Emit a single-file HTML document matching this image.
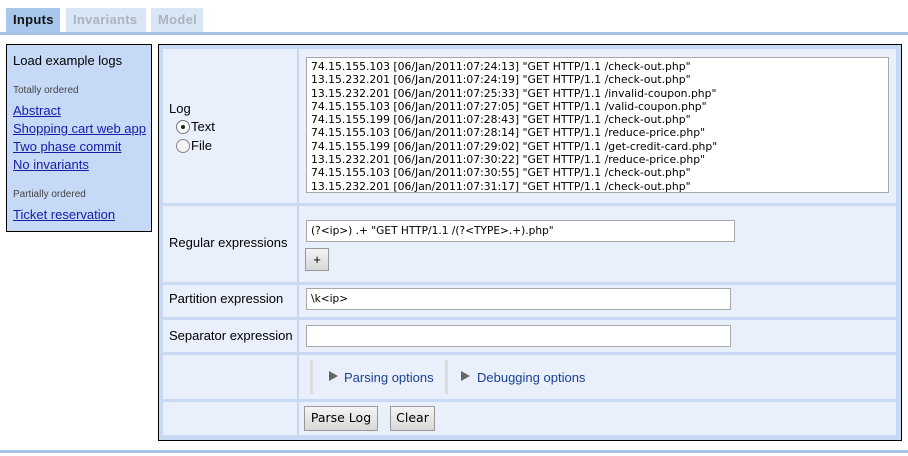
<!DOCTYPE html><html><head><style>
body{margin:0;width:908px;height:456px;background:#fff;font-family:"Liberation Sans",sans-serif;font-size:13px;position:relative;overflow:hidden}
.a{position:absolute}
.tab{position:absolute;top:8px;height:24px;line-height:24px;font-size:13px;font-weight:bold;padding:0 7px;letter-spacing:.3px}
a{color:#1a1aa6;text-decoration:underline}
.cell{position:absolute;background:#e9f0fc}
.inp{position:absolute;background:#fff;border:1px solid #a8a8a8;box-sizing:border-box;font-size:11px;padding:4px 4px;color:#000}
.btn{position:absolute;background:linear-gradient(#f4f4f4,#d8d8d8);border:1px solid #999;box-sizing:border-box;text-align:center;font-size:13px;line-height:22px}
.tri{position:absolute;width:0;height:0;border-left:9px solid #666;border-top:5px solid transparent;border-bottom:5px solid transparent}
</style></head><body>
<div class="tab" style="left:6px;width:40px;background:#a7c8ec;color:#111">Inputs</div>
<div class="tab" style="left:66px;width:66px;background:#d9e6f5;color:#a9b4c0">Invariants</div>
<div class="tab" style="left:151px;width:38px;background:#d9e6f5;color:#a9b4c0">Model</div>
<div class="a" style="left:0;top:32px;width:908px;height:3px;background:#a5c4e6"></div>
<div class="a" style="left:0;top:450px;width:908px;height:3px;background:#a5c4e6"></div>

<div class="a" style="left:6px;top:44px;width:144px;height:186px;border:1px solid #000;background:#c6daf8;font-size:13px;line-height:18px">
<div class="a" style="left:6px;top:7px">Load example logs</div>
<div class="a" style="left:6px;top:37px;font-size:10px;color:#444">Totally ordered</div>
<div class="a" style="left:6px;top:57px;white-space:nowrap"><a>Abstract</a><br><a>Shopping cart web app</a><br><a>Two phase commit</a><br><a>No invariants</a></div>
<div class="a" style="left:6px;top:141px;font-size:10px;color:#444">Partially ordered</div>
<div class="a" style="left:6px;top:161px"><a>Ticket reservation</a></div>
</div>

<div class="a" style="left:158px;top:44px;width:742px;height:395px;border:1px solid #000;background:#c8daf3"></div>
<div class="cell" style="left:163px;top:49px;width:134px;height:154px"></div>
<div class="cell" style="left:299px;top:49px;width:597px;height:154px"></div>
<div class="cell" style="left:163px;top:206px;width:134px;height:76px"></div>
<div class="cell" style="left:299px;top:206px;width:597px;height:76px"></div>
<div class="cell" style="left:163px;top:285px;width:134px;height:32px"></div>
<div class="cell" style="left:299px;top:285px;width:597px;height:32px"></div>
<div class="cell" style="left:163px;top:320px;width:134px;height:32px"></div>
<div class="cell" style="left:299px;top:320px;width:597px;height:32px"></div>
<div class="cell" style="left:163px;top:355px;width:134px;height:44px"></div>
<div class="cell" style="left:299px;top:355px;width:597px;height:44px"></div>
<div class="cell" style="left:163px;top:402px;width:134px;height:33px"></div>
<div class="cell" style="left:299px;top:402px;width:597px;height:33px"></div>

<div class="a" style="left:169px;top:101px">Log</div>
<div class="a" style="left:176px;top:120px;width:12px;height:12px;border:1px solid #777;border-radius:50%;background:#fff"><div class="a" style="left:4px;top:4px;width:4px;height:4px;border-radius:50%;background:#222"></div></div>
<div class="a" style="left:191px;top:119px">Text</div>
<div class="a" style="left:176px;top:139px;width:12px;height:12px;border:1px solid #888;border-radius:50%;background:#f4f4f4"></div>
<div class="a" style="left:191px;top:138px">File</div>
<div class="inp" style="left:306px;top:57px;width:583px;height:136px;line-height:13.3px;padding:2px 4px;font-family:'DejaVu Sans',sans-serif;font-size:10.8px;white-space:pre">74.15.155.103 [06/Jan/2011:07:24:13] "GET HTTP/1.1 /check-out.php"
13.15.232.201 [06/Jan/2011:07:24:19] "GET HTTP/1.1 /check-out.php"
13.15.232.201 [06/Jan/2011:07:25:33] "GET HTTP/1.1 /invalid-coupon.php"
74.15.155.103 [06/Jan/2011:07:27:05] "GET HTTP/1.1 /valid-coupon.php"
74.15.155.199 [06/Jan/2011:07:28:43] "GET HTTP/1.1 /check-out.php"
74.15.155.103 [06/Jan/2011:07:28:14] "GET HTTP/1.1 /reduce-price.php"
74.15.155.199 [06/Jan/2011:07:29:02] "GET HTTP/1.1 /get-credit-card.php"
13.15.232.201 [06/Jan/2011:07:30:22] "GET HTTP/1.1 /reduce-price.php"
74.15.155.103 [06/Jan/2011:07:30:55] "GET HTTP/1.1 /check-out.php"
13.15.232.201 [06/Jan/2011:07:31:17] "GET HTTP/1.1 /check-out.php"</div>

<div class="a" style="left:169px;top:235px">Regular expressions</div>
<div class="inp" style="left:306px;top:220px;width:429px;height:22px;font-family:'DejaVu Sans',sans-serif;font-size:10.6px">(?&lt;ip&gt;) .+ "GET HTTP/1.1 /(?&lt;TYPE&gt;.+).php"</div>
<div class="btn" style="left:305px;top:248px;width:24px;height:23px">+</div>

<div class="a" style="left:169px;top:291px">Partition expression</div>
<div class="inp" style="left:306px;top:288px;width:425px;height:22px;font-family:'DejaVu Sans',sans-serif;font-size:10.6px">\k&lt;ip&gt;</div>
<div class="a" style="left:169px;top:328px">Separator expression</div>
<div class="inp" style="left:306px;top:325px;width:425px;height:22px"></div>

<div class="a" style="left:310px;top:360px;width:3px;height:34px;background:#dcdcdc"></div>
<div class="a" style="left:445px;top:360px;width:3px;height:34px;background:#dcdcdc"></div>
<div class="tri" style="left:329px;top:371px"></div>
<div class="a" style="left:344px;top:370px;color:#1c3f94">Parsing options</div>
<div class="tri" style="left:461px;top:371px"></div>
<div class="a" style="left:477px;top:370px;color:#1c3f94">Debugging options</div>

<div class="btn" style="left:304px;top:406px;width:74px;height:25px;font-family:'DejaVu Sans',sans-serif;font-size:12.5px">Parse Log</div>
<div class="btn" style="left:390px;top:406px;width:45px;height:25px;font-family:'DejaVu Sans',sans-serif;font-size:12.5px">Clear</div>
</body></html>
